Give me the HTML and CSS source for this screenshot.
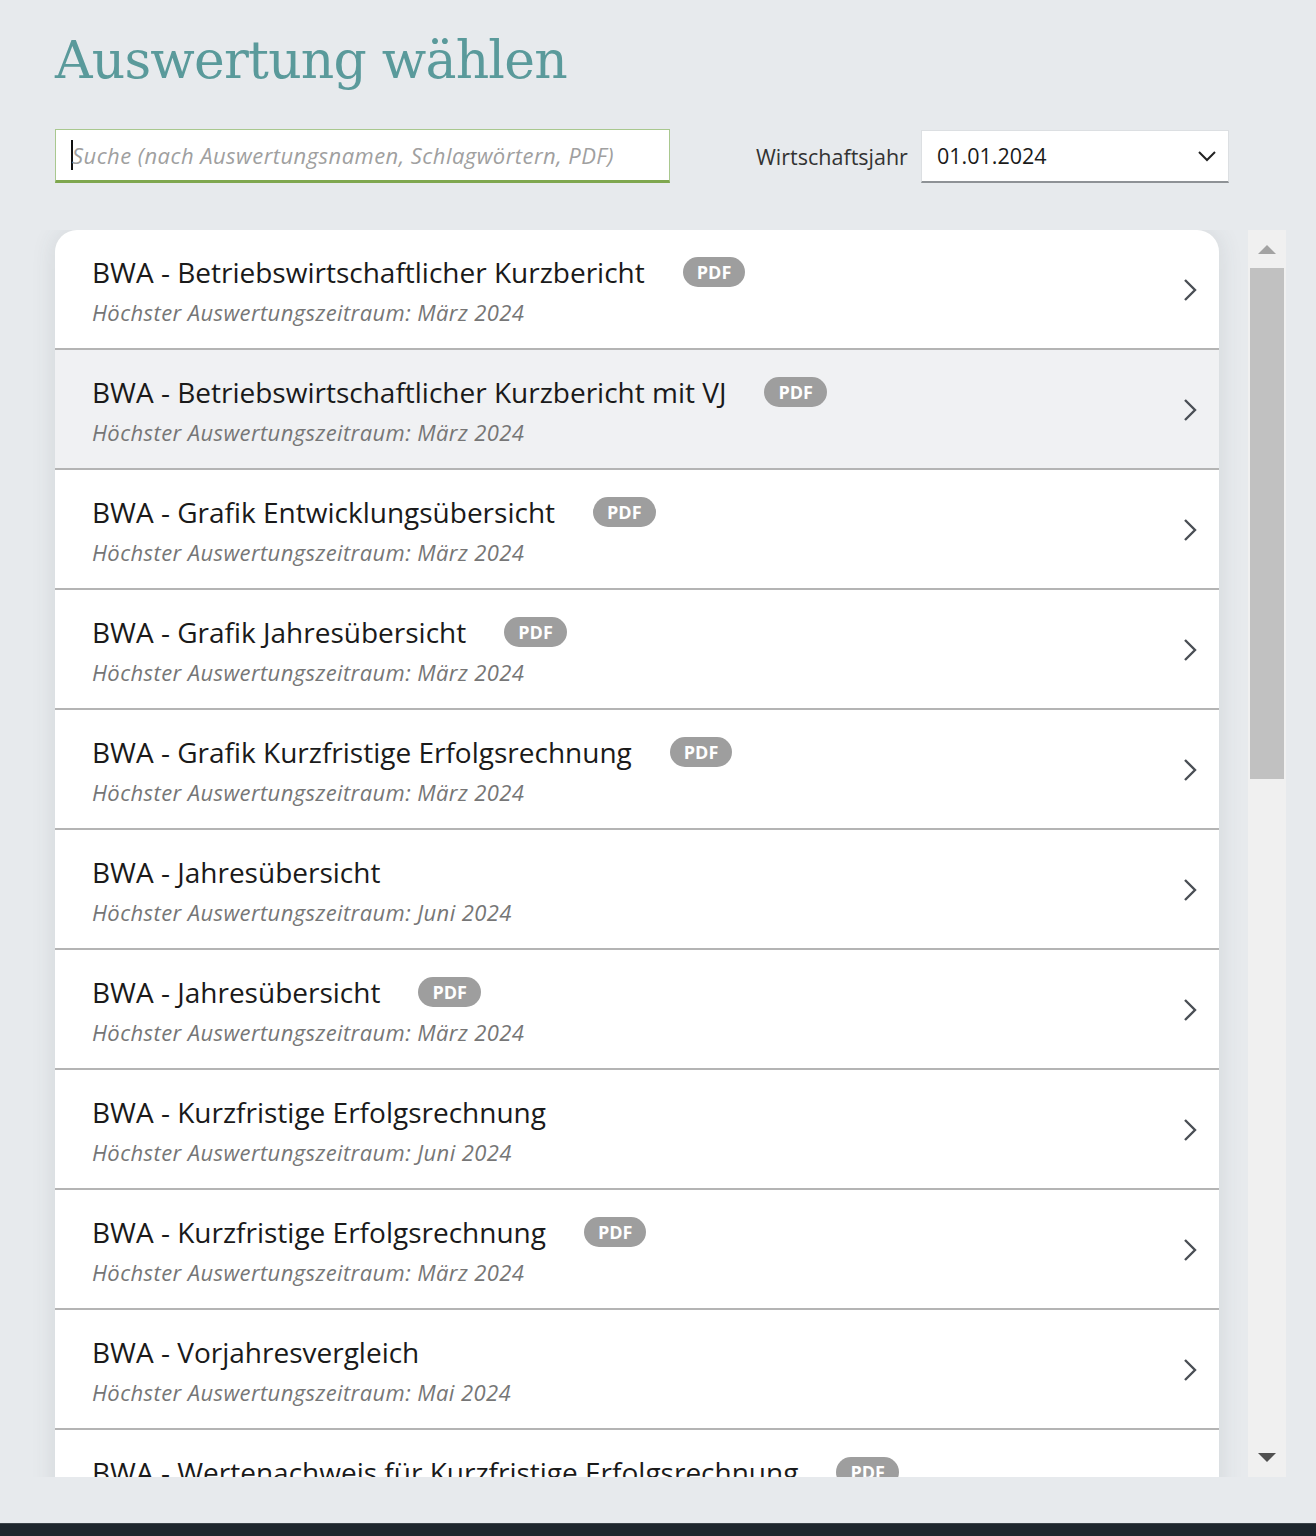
FILE: index.html
```html
<!DOCTYPE html>
<html lang="de">
<head>
<meta charset="utf-8">
<title>Auswertung wählen</title>
<link rel="stylesheet" href="styles.css">
</head>
<body>
<div class="page">
  <h1 class="title">Auswertung wählen</h1>
  <div class="toolbar">
    <div class="search"><span class="caret"></span><span class="placeholder">Suche (nach Auswertungsnamen, Schlagwörtern, PDF)</span></div>
    <div class="year">
      <span class="year-label">Wirtschaftsjahr</span>
      <div class="select">
        <span class="select-value">01.01.2024</span>
        <svg class="select-chev" width="20" height="12" viewBox="0 0 20 12"><polyline points="2,2 10,10 18,2" fill="none" stroke="#222" stroke-width="2"/></svg>
      </div>
    </div>
  </div>
  <div class="list-wrap">
    <div class="viewport">
      <ul class="list">
        <li class="row"><div class="row-text"><div class="row-title">BWA - Betriebswirtschaftlicher Kurzbericht<span class="badge">PDF</span></div><div class="row-sub">Höchster Auswertungszeitraum: März 2024</div></div><svg class="chev" width="14" height="24" viewBox="0 0 14 24"><polyline points="2,2 12,12 2,22" fill="none" stroke="#4a4f55" stroke-width="2.4"/></svg></li>
        <li class="row hover"><div class="row-text"><div class="row-title">BWA - Betriebswirtschaftlicher Kurzbericht mit VJ<span class="badge">PDF</span></div><div class="row-sub">Höchster Auswertungszeitraum: März 2024</div></div><svg class="chev" width="14" height="24" viewBox="0 0 14 24"><polyline points="2,2 12,12 2,22" fill="none" stroke="#4a4f55" stroke-width="2.4"/></svg></li>
        <li class="row"><div class="row-text"><div class="row-title">BWA - Grafik Entwicklungsübersicht<span class="badge">PDF</span></div><div class="row-sub">Höchster Auswertungszeitraum: März 2024</div></div><svg class="chev" width="14" height="24" viewBox="0 0 14 24"><polyline points="2,2 12,12 2,22" fill="none" stroke="#4a4f55" stroke-width="2.4"/></svg></li>
        <li class="row"><div class="row-text"><div class="row-title">BWA - Grafik Jahresübersicht<span class="badge">PDF</span></div><div class="row-sub">Höchster Auswertungszeitraum: März 2024</div></div><svg class="chev" width="14" height="24" viewBox="0 0 14 24"><polyline points="2,2 12,12 2,22" fill="none" stroke="#4a4f55" stroke-width="2.4"/></svg></li>
        <li class="row"><div class="row-text"><div class="row-title">BWA - Grafik Kurzfristige Erfolgsrechnung<span class="badge">PDF</span></div><div class="row-sub">Höchster Auswertungszeitraum: März 2024</div></div><svg class="chev" width="14" height="24" viewBox="0 0 14 24"><polyline points="2,2 12,12 2,22" fill="none" stroke="#4a4f55" stroke-width="2.4"/></svg></li>
        <li class="row"><div class="row-text"><div class="row-title">BWA - Jahresübersicht</div><div class="row-sub">Höchster Auswertungszeitraum: Juni 2024</div></div><svg class="chev" width="14" height="24" viewBox="0 0 14 24"><polyline points="2,2 12,12 2,22" fill="none" stroke="#4a4f55" stroke-width="2.4"/></svg></li>
        <li class="row"><div class="row-text"><div class="row-title">BWA - Jahresübersicht<span class="badge">PDF</span></div><div class="row-sub">Höchster Auswertungszeitraum: März 2024</div></div><svg class="chev" width="14" height="24" viewBox="0 0 14 24"><polyline points="2,2 12,12 2,22" fill="none" stroke="#4a4f55" stroke-width="2.4"/></svg></li>
        <li class="row"><div class="row-text"><div class="row-title">BWA - Kurzfristige Erfolgsrechnung</div><div class="row-sub">Höchster Auswertungszeitraum: Juni 2024</div></div><svg class="chev" width="14" height="24" viewBox="0 0 14 24"><polyline points="2,2 12,12 2,22" fill="none" stroke="#4a4f55" stroke-width="2.4"/></svg></li>
        <li class="row"><div class="row-text"><div class="row-title">BWA - Kurzfristige Erfolgsrechnung<span class="badge">PDF</span></div><div class="row-sub">Höchster Auswertungszeitraum: März 2024</div></div><svg class="chev" width="14" height="24" viewBox="0 0 14 24"><polyline points="2,2 12,12 2,22" fill="none" stroke="#4a4f55" stroke-width="2.4"/></svg></li>
        <li class="row"><div class="row-text"><div class="row-title">BWA - Vorjahresvergleich</div><div class="row-sub">Höchster Auswertungszeitraum: Mai 2024</div></div><svg class="chev" width="14" height="24" viewBox="0 0 14 24"><polyline points="2,2 12,12 2,22" fill="none" stroke="#4a4f55" stroke-width="2.4"/></svg></li>
        <li class="row"><div class="row-text"><div class="row-title">BWA - Wertenachweis für Kurzfristige Erfolgsrechnung<span class="badge">PDF</span></div><div class="row-sub">Höchster Auswertungszeitraum: März 2024</div></div><svg class="chev" width="14" height="24" viewBox="0 0 14 24"><polyline points="2,2 12,12 2,22" fill="none" stroke="#4a4f55" stroke-width="2.4"/></svg></li>
      </ul>
    </div>
    <div class="scrollbar">
      <div class="sb-btn"><svg width="18" height="10" viewBox="0 0 18 10"><polygon points="0,10 9,1 18,10" fill="#a3a3a3"/></svg></div>
      <div class="sb-track"><div class="sb-thumb"></div></div>
      <div class="sb-btn"><svg width="18" height="10" viewBox="0 0 18 10"><polygon points="0,0 18,0 9,9" fill="#505050"/></svg></div>
    </div>
  </div>
  <div class="footer-bar"></div>
</div>
</body>
</html>
```

FILE: styles.css
```css
html, body {
  margin: 0;
  padding: 0;
}
body {
  background: #e7eaed;
  font-family: "Open Sans", "Noto Sans", sans-serif;
  color: #1a1a1a;
  width: 1316px;
  height: 1536px;
  overflow: hidden;
}
.page {
  display: flex;
  flex-direction: column;
  height: 1536px;
}
.title {
  margin: 22px 0 0 55px;
  font-family: "DejaVu Serif", serif;
  font-weight: normal;
  font-size: 52px;
  line-height: 76px;
  color: #5a9a9b;
  letter-spacing: -0.8px;
}
.toolbar {
  display: flex;
  align-items: center;
  margin: 31px 0 0 55px;
}
.search {
  box-sizing: border-box;
  width: 615px;
  height: 54px;
  background: #fff;
  border: 1px solid #a9c88f;
  border-bottom: 3px solid #7fa74f;
  display: flex;
  align-items: center;
  padding-left: 15px;
}
.caret {
  width: 2px;
  height: 30px;
  background: #111;
  margin-right: -1px;
}
.placeholder {
  font-style: italic;
  font-size: 22px;
  letter-spacing: 0.45px;
  color: #a0a0a0;
}
.year {
  display: flex;
  align-items: center;
  margin-left: 86px;
}
.year-label {
  font-size: 21.5px;
  color: #333;
  margin-right: 13px;
}
.select {
  box-sizing: border-box;
  width: 308px;
  height: 53px;
  background: #fff;
  border: 1px solid #dcdfe2;
  border-bottom: 2px solid #8e9296;
  display: flex;
  align-items: center;
  justify-content: space-between;
  padding: 0 11px 0 15px;
}
.select-value {
  font-size: 21.5px;
  color: #1a1a1a;
}
.list-wrap {
  display: flex;
  margin: 47px 0 0 28px;
  width: 1258px;
  height: 1247px;
}
.viewport {
  flex: 1;
  overflow: hidden;
  padding: 0 29px 0 27px;
}
.list {
  list-style: none;
  margin: 0;
  padding: 0;
  background: #fff;
  border-radius: 22px 22px 0 0;
  box-shadow: 0 0 24px rgba(60, 70, 80, 0.12);
}
.row {
  box-sizing: border-box;
  height: 120px;
  border-bottom: 2px solid #b4b4b4;
  display: flex;
  align-items: center;
  justify-content: space-between;
  padding: 0 22px 0 37px;
}
.row:first-child {
  border-radius: 22px 22px 0 0;
}
.row.hover {
  background: #f0f1f3;
}
.row-text {
  display: flex;
  flex-direction: column;
  margin-top: 2px;
}
.row-title {
  font-size: 28px;
  line-height: 38px;
  color: #1a1a1a;
  display: flex;
  align-items: center;
}
.badge {
  margin-left: 38px;
  background: #9e9e9e;
  color: #fff;
  font-weight: bold;
  font-size: 18px;
  line-height: 30px;
  height: 30px;
  padding: 0 14px;
  border-radius: 15px;
}
.row-sub {
  font-style: italic;
  font-size: 22px;
  letter-spacing: 0.4px;
  line-height: 30px;
  color: #767676;
  margin-top: 6.5px;
}
.chev {
  display: block;
  margin-top: 2px;
}
.scrollbar {
  width: 38px;
  background: #f0f0f0;
  display: flex;
  flex-direction: column;
}
.sb-btn {
  height: 38px;
  display: flex;
  align-items: center;
  justify-content: center;
}
.sb-track {
  flex: 1;
  padding: 0 2px;
}
.sb-thumb {
  height: 511px;
  background: #c1c1c1;
}
.footer-bar {
  margin-top: auto;
  height: 13px;
  box-sizing: border-box;
  background: #1e262d;
  border-top: 1px solid #3c4349;
}
```
